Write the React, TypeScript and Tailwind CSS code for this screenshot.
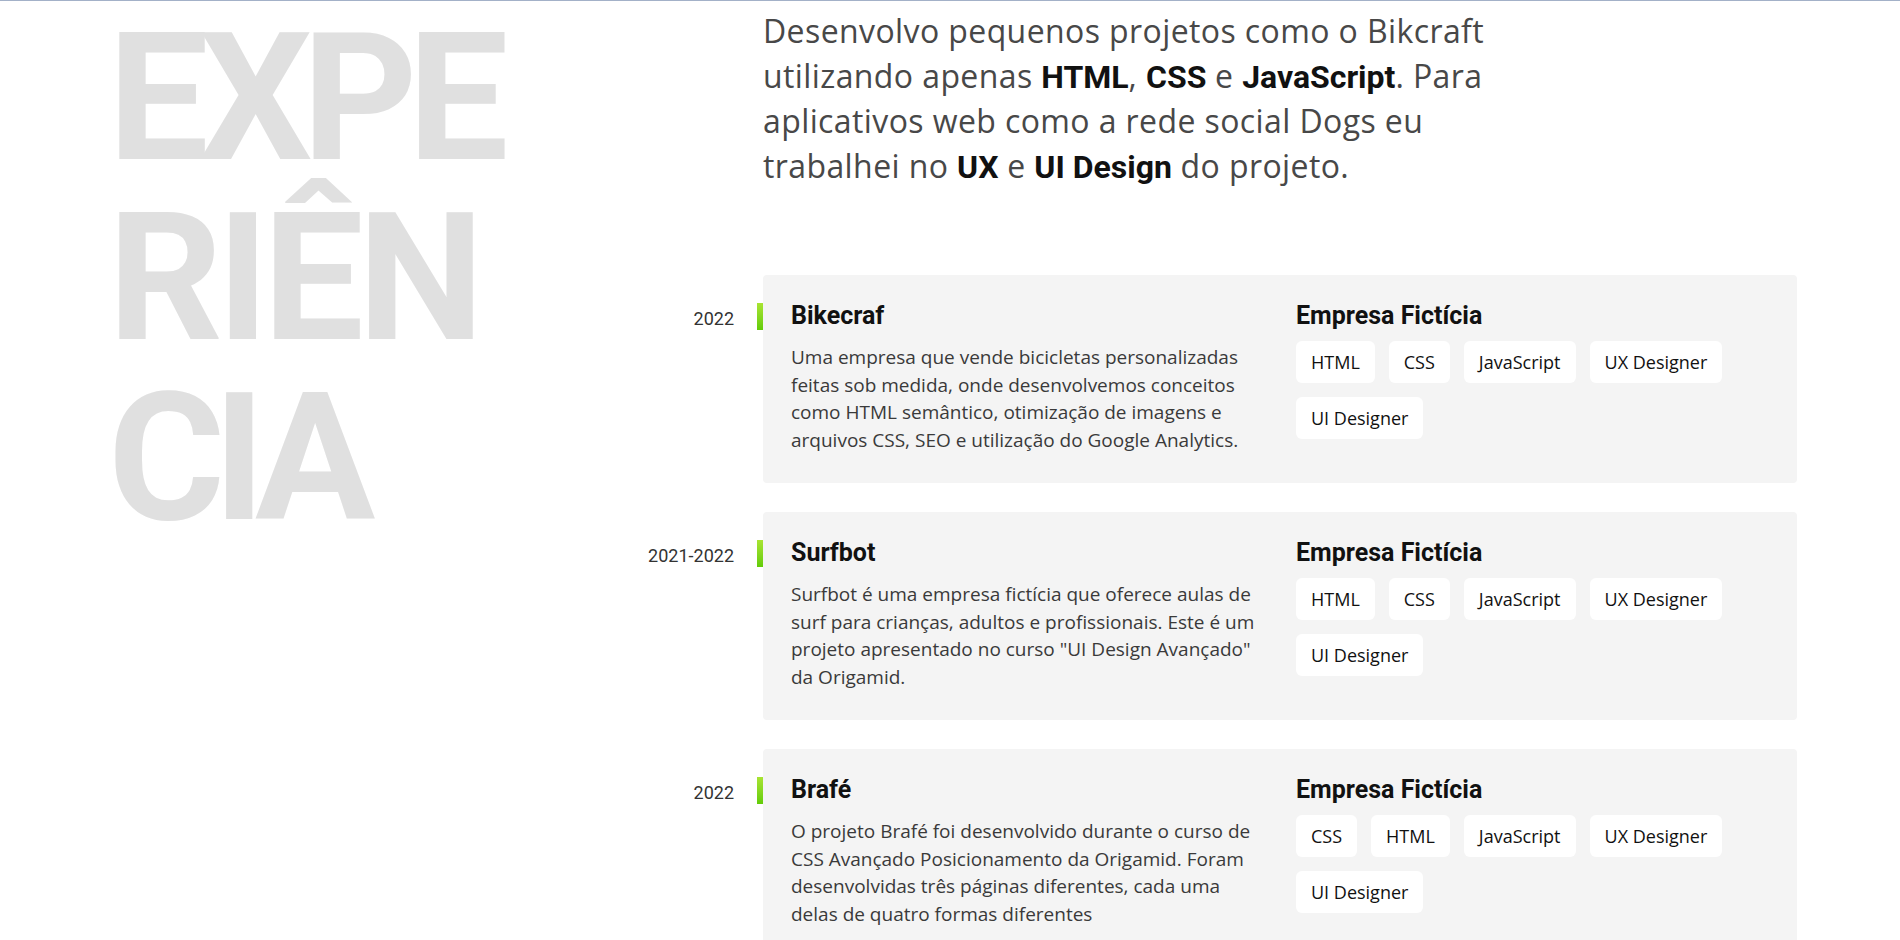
const roboto = { fontFamily: 'Roboto, "Open Sans", sans-serif' };
const openSans = { fontFamily: '"Open Sans", Roboto, sans-serif' };

type Job = {
  year: string;
  title: string;
  lines: string[];
  company: string;
  tags: string[];
};

const jobs: Job[] = [
  {
    year: '2022',
    title: 'Bikecraf',
    lines: [
      'Uma empresa que vende bicicletas personalizadas',
      'feitas sob medida, onde desenvolvemos conceitos',
      'como HTML semântico, otimização de imagens e',
      'arquivos CSS, SEO e utilização do Google Analytics.',
    ],
    company: 'Empresa Fictícia',
    tags: ['HTML', 'CSS', 'JavaScript', 'UX Designer', 'UI Designer'],
  },
  {
    year: '2021-2022',
    title: 'Surfbot',
    lines: [
      'Surfbot é uma empresa fictícia que oferece aulas de',
      'surf para crianças, adultos e profissionais. Este é um',
      'projeto apresentado no curso "UI Design Avançado"',
      'da Origamid.',
    ],
    company: 'Empresa Fictícia',
    tags: ['HTML', 'CSS', 'JavaScript', 'UX Designer', 'UI Designer'],
  },
  {
    year: '2022',
    title: 'Brafé',
    lines: [
      'O projeto Brafé foi desenvolvido durante o curso de',
      'CSS Avançado Posicionamento da Origamid. Foram',
      'desenvolvidas três páginas diferentes, cada uma',
      'delas de quatro formas diferentes',
    ],
    company: 'Empresa Fictícia',
    tags: ['CSS', 'HTML', 'JavaScript', 'UX Designer', 'UI Designer'],
  },
];

function Strong({ children }: { children: React.ReactNode }) {
  return (
    <b className="text-[32px] leading-none font-bold tracking-normal text-[#111]" style={roboto}>
      {children}
    </b>
  );
}

export default function App() {
  return (
    <div className="min-h-[940px] bg-white border-t border-[#a3b1c8] overflow-hidden" style={roboto}>
      <div className="flex">
        <aside className="w-[640px] shrink-0 pl-[108px]">
          <h2 className="mt-[7px] text-[179px] leading-[180px] font-bold text-[#e0e0e0]">
            <span className="block tracking-[-10px]">EXPE</span>
            <span className="block tracking-[-6px]">RIÊN</span>
            <span className="block tracking-[-12px]">CIA</span>
          </h2>
        </aside>

        <main className="w-[1157px]">
          <p
            className="ml-[123px] mt-[7px] text-[32px] leading-[45px] tracking-[0.4px] text-[#484848]"
            style={openSans}
          >
            Desenvolvo pequenos projetos como o Bikcraft
            <br />
            utilizando apenas <Strong>HTML</Strong>, <Strong>CSS</Strong> e <Strong>JavaScript</Strong>. Para
            <br />
            aplicativos web como a rede social Dogs eu
            <br />
            trabalhei no <Strong>UX</Strong> e <Strong>UI Design</Strong> do projeto.
          </p>

          <div className="mt-[87px] flex flex-col gap-[29px]">
            {jobs.map((job, i) => (
              <div key={i} className="grid grid-cols-[117px_6px_1fr]">
                <span className="pt-[30px] pr-[23px] text-right text-[18px] leading-[28px] text-[#333]">
                  {job.year}
                </span>
                <span className="mt-[28px] h-[27px] bg-gradient-to-b from-[#a8e432] to-[#62cc06]" />
                <div className="rounded-[4px] bg-[#f4f4f4] p-[28px] grid grid-cols-2 gap-8 h-[208px]">
                  <div>
                    <h3 className="text-[25px] leading-[26px] font-bold text-[#111]">{job.title}</h3>
                    <p
                      className="mt-[15px] text-[19px] leading-[27.7px] text-[#3a3a3a] whitespace-nowrap"
                      style={openSans}
                    >
                      {job.lines.map((l, j) => (
                        <span key={j} className="block">
                          {l}
                        </span>
                      ))}
                    </p>
                  </div>
                  <div>
                    <h3 className="text-[25px] leading-[26px] font-bold text-[#111]">{job.company}</h3>
                    <div className="mt-[12px] flex flex-wrap gap-[14px]">
                      {job.tags.map((t) => (
                        <span
                          key={t}
                          className="h-[42px] px-[15px] flex items-center rounded-[6px] bg-white text-[18px] text-[#111]"
                          style={openSans}
                        >
                          {t}
                        </span>
                      ))}
                    </div>
                  </div>
                </div>
              </div>
            ))}
          </div>
        </main>
      </div>
    </div>
  );
}
